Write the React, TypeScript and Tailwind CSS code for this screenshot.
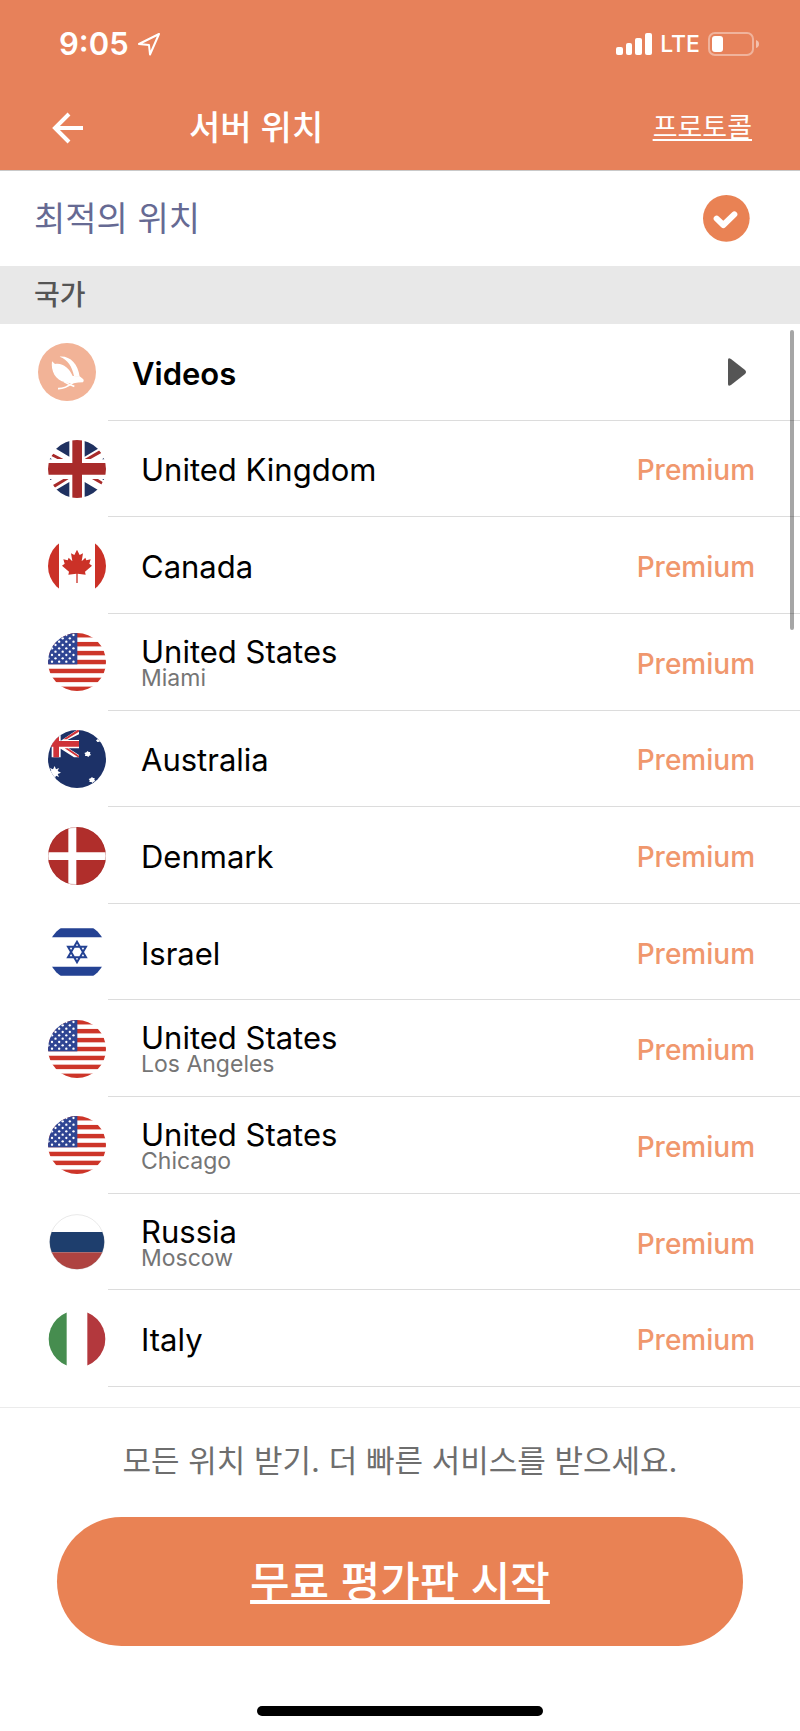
import type React from "react";

const PREMIUM_LABEL = "Premium";

const UnitedKingdomFlag = () => (
	<>
		<rect width="174" height="174" fill="#fff" />
		<g fill="#1f3160">
			<path d="M64 0V50L20 24V0ZM64 126V174H20V152ZM110 0V50L154 24V0ZM110 126L154 152V174H110Z" />
			<path d="M0 50L12 58H0ZM174 50L162 58H174ZM0 124V117H12ZM174 124V117H162Z" />
		</g>
		<g fill="#a82b2a">
			<path d="M16 41L46 57H28L10 48ZM110 57L156 30L160 39L128 57ZM15 135L46 117H62L20 143ZM132 117H150L165 127L162 134Z" />
			<path d="M73 0H102V69H174V104H102V174H73V104H0V69H73Z" />
		</g>
	</>
);

const CanadaFlag = () => (
	<>
		<rect width="174" height="174" fill="#fff" />
		<path d="M0 0H33V174H0ZM141 0H174V174H141Z" fill="#cb3127" />
		<path
			d="M87 38L95 54L105 49L101 73L112 62L115 70L128 67L124 80L132 86L111 104L113 113L89 110L89 138H85L85 110L61 113L63 104L42 86L50 80L46 67L59 70L62 62L73 73L69 49L79 54Z"
			fill="#cb3127"
		/>
	</>
);

const UnitedStatesFlag = () => (
	<>
		<rect width="174" height="174" fill="#fff" />
		{[...Array(7)].map((_, stripe) => (
			<rect
				key={`stripe-${stripe * 2}`}
				y={stripe * 26.8}
				width="174"
				height="13.4"
				fill="#cd3529"
			/>
		))}
		<rect width="88" height="94" fill="#2f4593" />
		{[...Array(9)].map((_, row) =>
			[...Array(4)].map((_, column) => (
				<circle
					key={`star-${row}-${column}`}
					cx={(row % 2 === 0 ? 12 : 1) + column * 21.5}
					cy={6 + row * 10}
					r="3.5"
					fill="#fff"
				/>
			)),
		)}
	</>
);

const AustraliaFlag = () => (
	<>
		<rect width="174" height="174" fill="#1c3167" />
		<path
			d="M33 36L86 0H93V13L58 30H93V55H62L93 75V82H78L38 56V82H11V0H38V36Z"
			fill="#fff"
		/>
		<path
			d="M0 33H16V0H33V33H93V50H33V82H16V50H0ZM46 28L88 0H93V5L56 28ZM50 55H60L93 77V82H90Z"
			fill="#cf3339"
		/>
		<path
			d="M20 108L24 118L33 114L29 123L39 128L29 132L33 141L24 137L20 147L15 137L6 141L10 132L0 128L10 123L6 114L15 118Z"
			fill="#fff"
		/>
		<g fill="#fff">
			<path d="M119 63L122 66L127 66L126 71L129 75L124 77L121 81L117 78L111 78L112 73L109 69L115 67Z" />
			<path d="M132 141L135 144L140 144L139 149L142 153L137 155L134 159L130 156L124 156L125 151L122 147L128 145Z" />
			<path d="M150 22L152 29L156 35L148 36L144 31L149 28Z" />
		</g>
	</>
);

const DenmarkFlag = () => (
	<>
		<rect width="174" height="174" fill="#b02e2b" />
		<path d="M61 0H85V76H174V99H85V174H61V99H0V76H61Z" fill="#fff" />
		<circle
			cx="87"
			cy="87"
			r="86"
			fill="none"
			stroke="#8a2a28"
			strokeOpacity="0.3"
			strokeWidth="2"
		/>
	</>
);

const IsraelFlag = () => (
	<>
		<rect width="174" height="174" fill="#fff" />
		<path d="M0 16H174V43H0ZM0 131H174V158H0Z" fill="#244293" />
		<path
			d="M87 56L114 103H60ZM87 118L60 71H114Z"
			fill="none"
			stroke="#244293"
			strokeWidth="6"
		/>
	</>
);

const RussiaFlag = () => (
	<>
		<clipPath id="russia-disc">
			<circle cx="87" cy="87" r="82" />
		</clipPath>
		<g clipPath="url(#russia-disc)">
			<rect width="174" height="174" fill="#fff" />
			<rect y="57" width="174" height="61" fill="#1e3e6d" />
			<rect y="118" width="174" height="56" fill="#ae4341" />
		</g>
		<circle
			cx="87"
			cy="87"
			r="82"
			fill="none"
			stroke="#777"
			strokeOpacity="0.25"
			strokeWidth="2"
		/>
	</>
);

const ItalyFlag = () => (
	<>
		<clipPath id="italy-disc">
			<circle cx="87" cy="87" r="85" />
		</clipPath>
		<g clipPath="url(#italy-disc)">
			<rect width="174" height="174" fill="#fff" />
			<rect width="56" height="174" fill="#468d4f" />
			<rect x="118" width="56" height="174" fill="#b3383d" />
		</g>
	</>
);

interface ServerLocation {
	id: string;
	name: string;
	city?: string;
	Flag: React.FC;
}

const locations: ServerLocation[] = [
	{ id: "uk", name: "United Kingdom", Flag: UnitedKingdomFlag },
	{ id: "ca", name: "Canada", Flag: CanadaFlag },
	{ id: "us-mia", name: "United States", city: "Miami", Flag: UnitedStatesFlag },
	{ id: "au", name: "Australia", Flag: AustraliaFlag },
	{ id: "dk", name: "Denmark", Flag: DenmarkFlag },
	{ id: "il", name: "Israel", Flag: IsraelFlag },
	{
		id: "us-la",
		name: "United States",
		city: "Los Angeles",
		Flag: UnitedStatesFlag,
	},
	{
		id: "us-chi",
		name: "United States",
		city: "Chicago",
		Flag: UnitedStatesFlag,
	},
	{ id: "ru", name: "Russia", city: "Moscow", Flag: RussiaFlag },
	{ id: "it", name: "Italy", Flag: ItalyFlag },
];

const StatusBar = () => (
	<div className="flex h-[88px] items-center justify-between pl-[59px] pr-[41px]">
		<div className="flex items-center gap-2">
			<span className="text-[31px] font-semibold leading-8">9:05</span>
			<svg
				className="size-6"
				viewBox="0 0 24 24"
				fill="none"
				stroke="currentColor"
				strokeWidth="2"
				strokeLinejoin="round"
				aria-hidden="true"
			>
				<path d="M22 2L2 12L12 13L13 22.500Z" />
			</svg>
		</div>
		<div className="flex items-center gap-2">
			<svg
				className="h-6 w-9"
				viewBox="0 0 36 24"
				fill="currentColor"
				aria-hidden="true"
			>
				<rect x="0" y="15" width="7" height="8" rx="2" />
				<rect x="10" y="11" width="6" height="12" rx="2" />
				<rect x="19" y="6" width="7" height="17" rx="2" />
				<rect x="29" y="1" width="7" height="22" rx="2" />
			</svg>
			<span className="text-[23px] font-medium leading-8">LTE</span>
			<svg
				className="h-6 w-[51px]"
				viewBox="0 0 51 24"
				fill="none"
				aria-hidden="true"
			>
				<rect
					x="1"
					y="1"
					width="44"
					height="22"
					rx="6"
					stroke="#fff"
					strokeOpacity="0.4"
					strokeWidth="2"
				/>
				<rect x="4" y="4" width="11" height="16" rx="3" fill="#fff" />
				<path d="M48 8Q51 9 51 12T48 16Z" fill="#fff" fillOpacity="0.5" />
			</svg>
		</div>
	</div>
);

const Header = () => (
	<header className="border-b border-[#c9c9c9] bg-[#e7815a] pb-0.5 text-white">
		<StatusBar />
		<div className="flex h-20 items-center pl-[52px] pr-12">
			<button type="button" aria-label="뒤로">
				<svg
					className="size-8"
					viewBox="0 0 32 32"
					fill="none"
					stroke="currentColor"
					strokeWidth="4"
					aria-hidden="true"
				>
					<path d="M17 2L3 16L17 30M3 16H31" />
				</svg>
			</button>
			<h1 className="ml-[105px] flex-1 text-[34px] font-medium leading-10">
				서버 위치
			</h1>
			<button
				type="button"
				className="text-[27px] leading-10 underline decoration-2 underline-offset-2 [text-decoration-skip-ink:none]"
			>
				프로토콜
			</button>
		</div>
	</header>
);

const VideosIcon = () => (
	<svg
		className="size-[58px] shrink-0"
		viewBox="0 0 174 174"
		aria-hidden="true"
	>
		<circle cx="87" cy="87" r="87" fill="#f2b397" />
		<g fill="#fff">
			<path d="M42 55L51 63C72 58 94 74 104 99L125 100L136 109Q139 114 135 118Q120 118 107 121Q94 122 82 118C52 112 38 84 42 55Z" />
			<path d="M65 41C95 38 120 62 125 101L108 99C102 70 90 50 65 41Z" />
		</g>
		<path
			d="M60 137Q80 138 106 118M78 116Q94 126 109 130"
			fill="none"
			stroke="#fff"
			strokeWidth="5"
		/>
	</svg>
);

const VideosRow = () => (
	<li className="flex min-h-24 flex-1">
		<button type="button" className="flex flex-1 items-center pl-[38px] text-left">
			<VideosIcon />
			<span className="ml-3 flex flex-1 items-center justify-between self-stretch border-b border-[#dcdcdc] pl-6 pr-[54px]">
				<span className="pt-1 text-[31px] font-semibold leading-8">
					Videos
				</span>
				<svg
					className="h-7 w-[18px]"
					viewBox="0 0 18 28"
					fill="#555"
					aria-hidden="true"
				>
					<path d="M0 2Q0 -1 3 1L17 12Q19 14 17 16L3 27Q0 29 0 26Z" />
				</svg>
			</span>
		</button>
	</li>
);

const LocationRow: React.FC<{ location: ServerLocation }> = ({ location }) => {
	const { name, city, Flag } = location;

	return (
		<li className="flex min-h-24 flex-1">
			<button type="button" className="flex flex-1 items-center pl-12 text-left">
				<svg
					className="size-[58px] shrink-0 rounded-full"
					viewBox="0 0 174 174"
					aria-hidden="true"
				>
					<Flag />
				</svg>
				<span className="ml-0.5 flex flex-1 items-center justify-between self-stretch border-b border-[#dcdcdc] pl-[33px] pr-[45px] pt-1">
					<span className="flex flex-col">
						<span className="text-[31px] leading-7">{name}</span>
						{city && (
							<span className="text-[23px] leading-6 text-[#757575]">
								{city}
							</span>
						)}
					</span>
					<span className="text-[28px] font-medium leading-8 text-[#f0976d]">
						{PREMIUM_LABEL}
					</span>
				</span>
			</button>
		</li>
	);
};

const App: React.FC = () => {
	return (
		<div className="flex min-h-screen flex-col bg-white font-[Inter,'Noto_Sans_CJK_KR',sans-serif] text-black">
			<Header />
			<main className="flex flex-1 flex-col">
				<button
					type="button"
					className="flex h-[95px] items-center justify-between pl-[34px] pr-[50px] text-left"
				>
					<span className="text-[34px] leading-10 text-[#666a93]">
						최적의 위치
					</span>
					<svg
						className="size-[47px]"
						viewBox="0 0 141 141"
						fill="none"
						aria-hidden="true"
					>
						<circle cx="70" cy="70" r="70" fill="#e98254" />
						<path
							d="M41 71L61 90L94 58"
							stroke="#fff"
							strokeWidth="18"
							strokeLinecap="round"
							strokeLinejoin="round"
						/>
					</svg>
				</button>
				<h2 className="flex h-[58px] items-center bg-[#e8e8e8] pl-[34px] text-[28px] font-medium leading-8 text-[#555]">
					국가
				</h2>
				<div className="relative flex flex-1 flex-col pb-5">
					<ul className="flex flex-1 flex-col">
						<VideosRow />
						{locations.map((location) => (
							<LocationRow key={location.id} location={location} />
						))}
					</ul>
					<div className="absolute right-1.5 top-1.5 h-[300px] w-1 rounded-full bg-black/35" />
				</div>
			</main>
			<footer className="flex flex-col items-center border-t border-[#ebebeb] pb-[15px] pt-8">
				<p className="text-[31px] leading-[42px] text-[#6e6e6e]">
					모든 위치 받기. 더 빠른 서비스를 받으세요.
				</p>
				<div className="mt-[35px] flex self-stretch px-[57px]">
					<button
						type="button"
						className="h-[129px] flex-1 rounded-full bg-[#e98254] text-[43px] font-medium leading-[56px] text-white underline decoration-4 underline-offset-2 [text-decoration-skip-ink:none]"
					>
						무료 평가판 시작
					</button>
				</div>
				<div className="mt-[60px] h-2.5 w-[286px] rounded-full bg-black" />
			</footer>
		</div>
	);
};

export default App;
